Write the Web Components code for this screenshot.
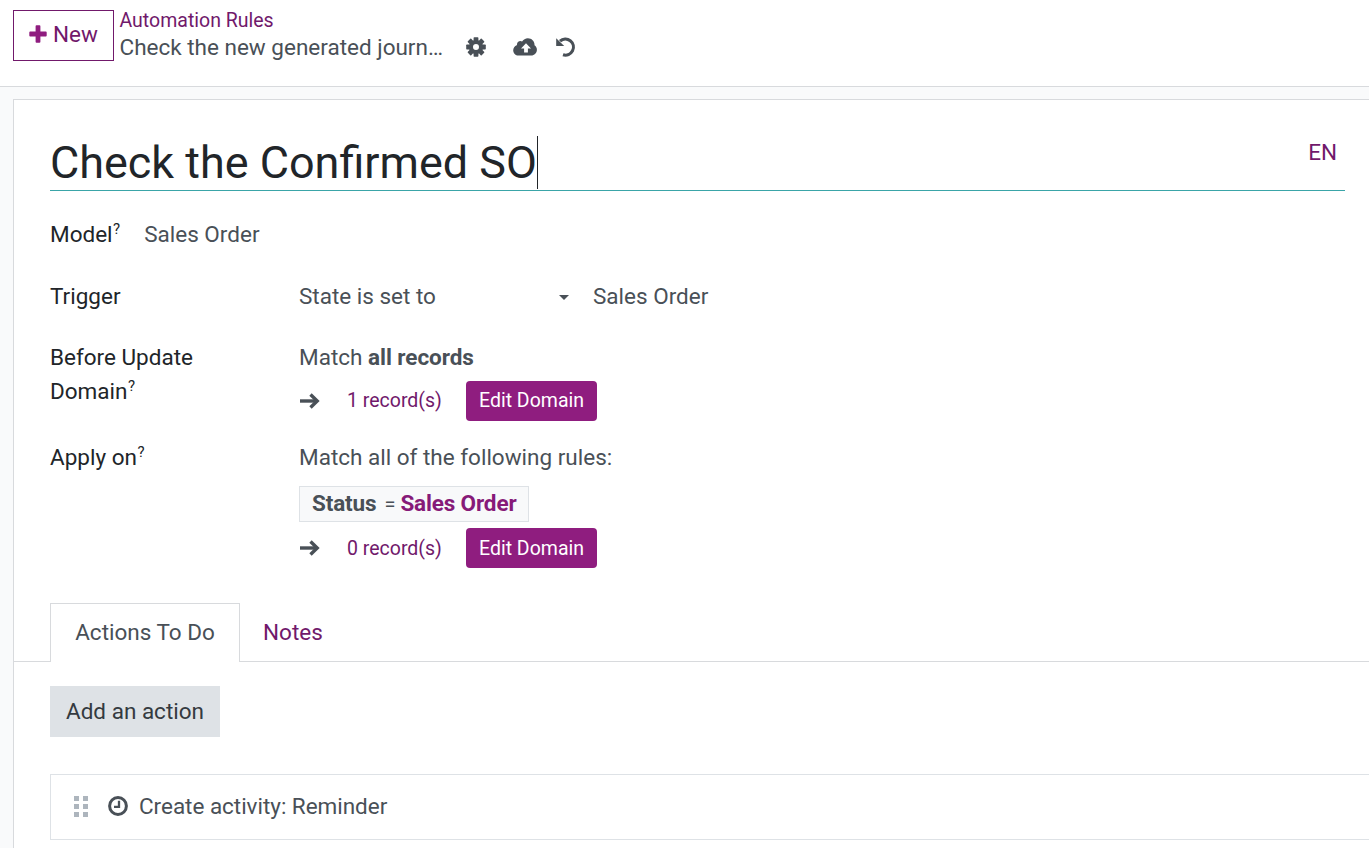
<!DOCTYPE html>
<html lang="en"><head><meta charset="utf-8"><title>Automation Rules</title>
<style>
html,body{margin:0;padding:0;height:848px;overflow:hidden;background:#f9fafb}
body{font-family:Roboto,"Liberation Sans",sans-serif;font-size:22.5px;color:#495057;line-height:1.5}
</style></head><body>
<app-header></app-header>
<form-sheet>
  <title-field slot="title" value="Check the Confirmed SO" lang-code="EN"></title-field>
  <model-row slot="model"></model-row>
  <form-grid slot="grid"></form-grid>
  <tab-bar slot="tabs"></tab-bar>
  <actions-pane slot="pane"></actions-pane>
</form-sheet>
<script>
const icons={
plus:`<svg width="18" height="18" viewBox="0 0 18 18"><path fill="#8f1d7f" d="M6.6 1.2a.9.9 0 0 1 .9-.9h3a.9.9 0 0 1 .9.9v5.4h5.4a.9.9 0 0 1 .9.9v3a.9.9 0 0 1-.9.9h-5.4v5.4a.9.9 0 0 1-.9.9h-3a.9.9 0 0 1-.9-.9v-5.4H1.2a.9.9 0 0 1-.9-.9v-3a.9.9 0 0 1 .9-.9h5.4z"/></svg>`,
cog:`<svg width="20" height="20" viewBox="0 0 20 20" fill="#495057"><g>${[0,45,90,135,180,225,270,315].map(a=>`<rect x="7.6" y="0.2" width="4.8" height="4.6" rx=".7" transform="rotate(${a} 10 10)"/>`).join('')}</g><path fill-rule="evenodd" d="M10 2.9a7.1 7.1 0 1 0 0 14.2a7.1 7.1 0 1 0 0-14.2zM10 7a3 3 0 1 1 0 6a3 3 0 1 1 0-6z"/></svg>`,
cloud:`<svg width="24" height="18" viewBox="0 0 24 18"><path fill="#495057" d="M5.6 17.6C2.5 17.6.2 15.300.2 12.300c0-2.300 1.400-4.300 3.500-5.100C4 6.900 4 6.600 4 6.400 4 4.600 5.500 3.100 7.400 3.100c.6 0 1.200.2 1.700.5C10.300 1.500 12.500.2 14.900.2c3.700 0 6.600 2.900 6.600 6.400v.7c1.500.9 2.400 2.600 2.400 4.500 0 3.200-2.500 5.800-5.700 5.800z"/><path fill="#fff" d="M13 5.300l5 5.200h-3.100v4.100h-3.800v-4.100H8z"/></svg>`,
undo:`<svg width="22" height="22" viewBox="0 0 22 22"><path fill="none" stroke="#495057" stroke-width="3.100" d="M6 5.200A8 8 0 1 1 9 18.700"/><path fill="#495057" d="M2.200 2.300l8 7.600H2.200z"/></svg>`,
clock:`<svg width="20" height="20" viewBox="0 0 20 20" fill="none" stroke="#495057"><circle cx="10" cy="10" r="8.400" stroke-width="3"/><path stroke-width="2.300" d="M11 4.800v6.100H6"/></svg>`,
arrow:`<svg width="21" height="16" viewBox="0 0 21 16" fill="none" stroke="#495057" stroke-width="3.400"><path d="M1 8h16"/><path d="M11.500 1.500l6.700 6.500-6.700 6.500"/></svg>`
};
function define(name,css,html){
  customElements.define(name,class extends HTMLElement{
    constructor(){super();const r=this.attachShadow({mode:'open'});r.innerHTML=`<style>${css}</style>${typeof html==='function'?html(this):html}`;}
  });
}
define('app-header',`
:host{display:flex;align-items:flex-start;box-sizing:border-box;height:87px;background:#fff;border-bottom:1px solid #d8dadd;padding:10px 0 0 13px}
.new{box-sizing:border-box;width:101px;height:51px;border:1px solid #71196b;color:#8f1d7f;display:flex;align-items:center;justify-content:center;gap:6px;padding-bottom:1px}
.new span{color:#71196b}
.new svg{margin-top:-2px}
.crumbs{margin-left:5.500px;display:flex;flex-direction:column}
.link{color:#71196b;font-size:19.5px;line-height:22px}
.cur{display:flex;align-items:center;height:34px;margin-top:-1px}
.t{width:323.500px;white-space:nowrap}
.i{display:flex;align-items:center;margin-top:-2px}
`,`<div class="new">${icons.plus}<span>New</span></div>
<div class="crumbs"><div class="link">Automation Rules</div>
<div class="cur"><div class="t">Check the new generated journ…</div>
<div class="i" style="margin-left:23px">${icons.cog}</div><div class="i" style="margin-left:27px">${icons.cloud}</div><div class="i" style="margin-left:17px">${icons.undo}</div></div></div>`);
define('form-sheet',`
:host{display:block;box-sizing:border-box;margin:12px 0 0 13px;height:760px;background:#fff;border:1px solid #d8dadd;border-right:0;border-bottom:0}
.top{padding:26px 24px 0 36px}
`,`<div class="top"><slot name="title"></slot><slot name="model"></slot><slot name="grid"></slot></div><slot name="tabs"></slot><slot name="pane"></slot>`);
define('title-field',`
:host{display:flex;align-items:flex-end;justify-content:space-between;box-sizing:border-box;height:65px;border-bottom:1px solid #3aa5a8;color:#212529;font-size:44.95px;line-height:64px}
.v{display:inline-block;border-right:1px solid #212529;height:53px;line-height:53px;margin-bottom:1px;white-space:nowrap}
.l{color:#71196b;font-size:22.5px;line-height:32px;align-self:flex-start;margin:10px 8px 0 0}
`,h=>`<span class="v">${h.getAttribute('value')}</span><span class="l">${h.getAttribute('lang-code')}</span>`);
define('model-row',`
:host{display:flex;height:32px;margin-top:28px;align-items:center}
.k{color:#212529}sup{font-size:15px;line-height:0;vertical-align:8px;margin-left:.5px}
.v{margin-left:24px}
`,`<span class="k">Model<sup>?</sup></span><span class="v">Sales Order</span>`);
define('form-grid',`
:host{display:grid;grid-template-columns:249px 1fr;margin-top:30px}
.k{color:#212529;line-height:34px}
sup{font-size:15px;line-height:0;vertical-align:8px;margin-left:.5px}
.trigger{display:flex;align-items:center;height:32px;margin-bottom:28px;grid-column:2}
.sel{display:flex;justify-content:space-between;align-items:center;padding-right:24px;box-sizing:border-box;width:294px}
.car{width:0;height:0;border:5px solid transparent;border-top:5px solid #495057;border-bottom:0}
.m{height:34px;line-height:34px}
b{font-weight:700}
.rec{display:flex;align-items:center;height:40px}
.rec a{color:#71196b;margin-left:27px;width:119px;font-size:19.5px}
.btn{box-sizing:border-box;height:40px;width:131px;background:#8f1d7f;color:#fff;border-radius:4px;display:flex;align-items:center;justify-content:center;font-size:19.5px}
.low a,.low .btn{padding-top:1px}.low svg{margin-top:-1px}
.chip{box-sizing:border-box;height:36px;width:230px;background:#f8f9fa;border:1px solid #dee2e6;display:flex;align-items:center;padding-left:12px;margin-bottom:6px;white-space:nowrap}
.chip b{letter-spacing:-.15px}.chip i{font-style:normal;margin:0 5px 0 8px;font-size:20px}.chip b+i+b{color:#861a78}
`,`<div class="k" style="line-height:32px;margin-top:-1px">Trigger</div>
<div class="trigger" style="grid-column:2"><div class="sel"><span>State is set to</span><span class="car"></span></div><span>Sales Order</span></div>
<div class="k" style="margin-top:-1px">Before Update<br>Domain<sup>?</sup></div>
<div><div class="m" style="margin:-1px 0 7px">Match <b style="letter-spacing:-.05px">all records</b></div>
<div class="rec">${icons.arrow}<a>1 record(s)</a><div class="btn">Edit Domain</div></div></div>
<div class="k" style="margin-top:19px">Apply on<sup>?</sup></div>
<div style="margin-top:19px"><div class="m" style="margin-bottom:12px">Match all of the following rules:</div>
<div class="chip"><b>Status</b><i>=</i><b>Sales Order</b></div>
<div class="rec low">${icons.arrow}<a>0 record(s)</a><div class="btn">Edit Domain</div></div></div>`);
define('tab-bar',`
:host{display:flex;box-sizing:border-box;height:59px;margin-top:35px;border-bottom:1px solid #d8dadd;padding-left:36px}
.tab{box-sizing:border-box;height:59px;display:flex;align-items:center;justify-content:center}
.on{width:190px;background:#fff;border:1px solid #d8dadd;border-bottom:0}
.off{color:#71196b;margin-left:23px}
`,`<div class="tab on">Actions To Do</div><div class="tab off">Notes</div>`);
define('actions-pane',`
:host{display:block;padding:24px 0 0 36px}
.add{box-sizing:border-box;width:170px;height:51px;background:#dee2e6;color:#343a40;display:flex;align-items:center;justify-content:center}
.card{box-sizing:border-box;height:66px;margin-top:37px;border:1px solid #dee2e6;border-right:0;display:flex;align-items:center;padding-left:23px;background:#fff}
.drag{display:grid;grid-template-columns:5px 5px;gap:3px 4px;margin-right:20px;margin-top:-2px}
.drag u{display:block;width:5px;height:5px;background:#adb5bd}
.c{display:flex;margin:-2px 11px 0 0}
`,`<div class="add">Add an action</div>
<div class="card"><div class="drag"><u></u><u></u><u></u><u></u><u></u><u></u></div><span class="c">${icons.clock}</span><span style="letter-spacing:-.03px">Create activity: Reminder</span></div>`);
</script>
</body></html>
